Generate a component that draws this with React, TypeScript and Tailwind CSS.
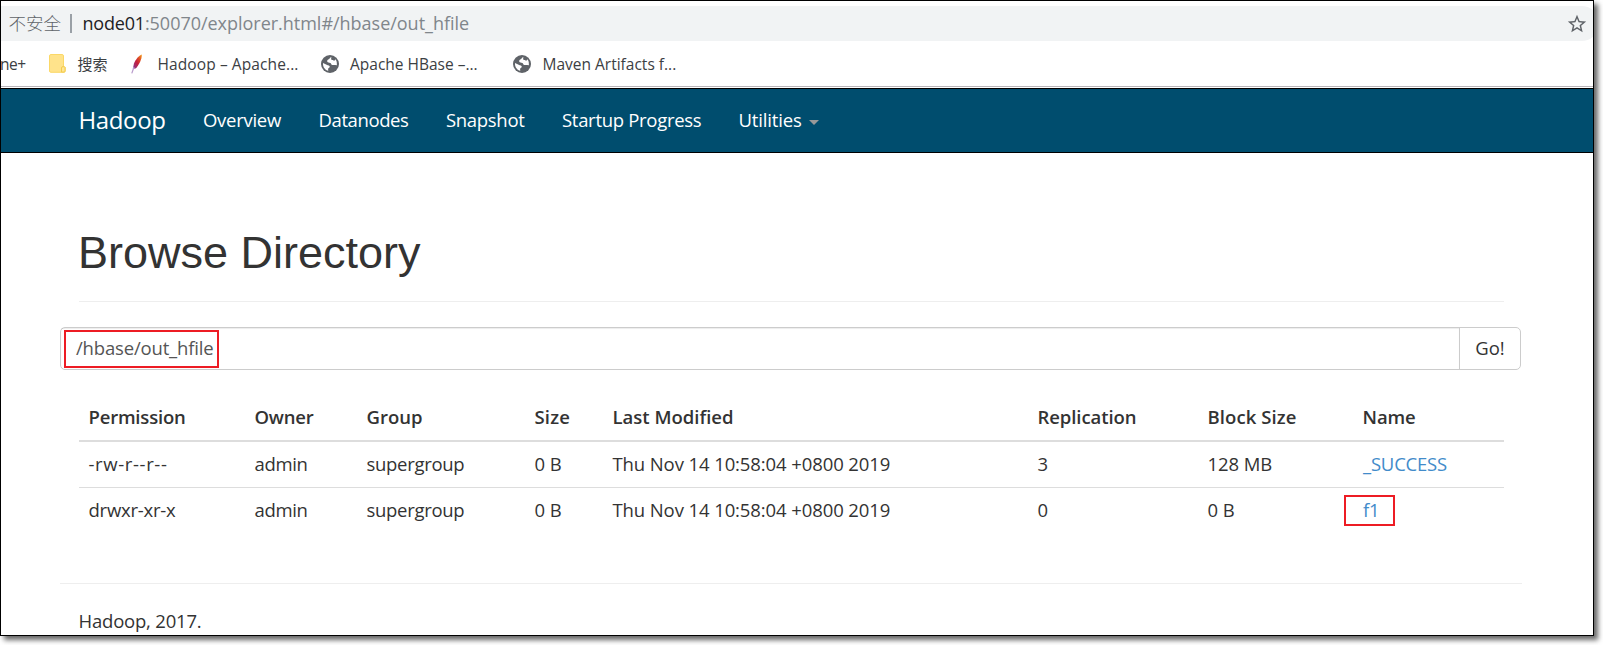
const columns = [
  { label: "Permission", width: "w-[166px]", tracking: "tracking-[-0.2px]" },
  { label: "Owner", width: "w-[112px]", tracking: "tracking-[-0.2px]" },
  { label: "Group", width: "w-[168px]", tracking: "" },
  { label: "Size", width: "w-[78px]", tracking: "tracking-[0.2px]" },
  { label: "Last Modified", width: "w-[425px]", tracking: "" },
  { label: "Replication", width: "w-[170px]", tracking: "tracking-[-0.07px]" },
  { label: "Block Size", width: "w-[155px]", tracking: "tracking-[0.09px]" },
  { label: "Name", width: "w-[151px]", tracking: "tracking-[-0.1px]" },
];

const files = [
  { permission: "-rw-r--r--", tracking: "tracking-[0.63px]", replication: "3", blockSize: "128 MB", name: "_SUCCESS", marked: false },
  { permission: "drwxr-xr-x", tracking: "tracking-[-0.23px]", replication: "0", blockSize: "0 B", name: "f1", marked: true },
];

function Star() {
  return (
    <svg className="size-[22px]" viewBox="0 0 24 24" fill="#5f6368">
      <path d="M22 9.24l-7.19-.62L12 2 9.19 8.63 2 9.24l5.46 4.73L5.82 21 12 17.27 18.18 21l-1.63-7.03L22 9.24zM12 15.4l-3.76 2.27 1-4.28-3.32-2.88 4.38-.38L12 6.1l1.71 4.04 4.38.38-3.32 2.88 1 4.28L12 15.4z" />
    </svg>
  );
}

function Folder() {
  return (
    <svg className="h-[19px] w-[17px]" viewBox="0 0 17 19">
      <path d="M.5 2Q.5.5 2 .5H13Q14.5.5 14.5 2V12.2L16.2 13.2V17Q16.2 18.3 15 18.3H2Q.5 18.3.5 17Z" fill="#ffe38b" stroke="#fbd867" />
      <path d="M12.5 18V14Q12.5 12.6 14 12.6T16 13.6V17Q16 18 15 18Z" fill="#ffe694" stroke="#f3cb4e" />
    </svg>
  );
}

function Feather() {
  return (
    <svg className="h-[20px] w-[12px]" viewBox="0 0 12 20">
      <defs>
        <linearGradient id="feather" x1="1" y1="0" x2="0" y2="1">
          <stop offset="0" stopColor="#f7a11b" />
          <stop offset="0.3" stopColor="#dc4b25" />
          <stop offset="0.55" stopColor="#c41f3e" />
          <stop offset="1" stopColor="#7d3a98" />
        </linearGradient>
      </defs>
      <path d="M10.8.4C8 1.2 4.500 5.500 3 9.500L1.800 14.800 4.600 14.600C8 11 11 5 10.800.4Z" fill="url(#feather)" />
      <path d="M3 13L.8 19.400" stroke="#b79acb" strokeWidth="1.200" />
    </svg>
  );
}

function Globe() {
  return (
    <svg className="size-[18px]" viewBox="0 0 18 18">
      <circle cx="9" cy="9" r="9" fill="#5f6368" />
      <path d="M10.300 2.100C8.900 2.600 8.900 3.800 7.700 4.300 6.400 4.800 5.900 5.700 6.300 6.800 6.700 7.800 8.300 7.700 9.300 8 10.200 8.300 10.100 9.500 11 9.900 12 10.300 13.300 9.700 14.100 10.100L15.900 10.300C15.700 8 16.300 6.500 14.300 4.300 13.400 6.200 12.700 6 12.300 5.300 11.900 4.500 11 5.300 10.300 4.400 9.900 3.700 10.500 2.900 10.300 2.100Z" fill="#fff" />
      <path d="M2 8.100L6.700 10.300C8.500 10.600 9.100 11.400 8.600 12.300 8.200 13 7.100 13.200 7.100 14.200L7.300 15.800C4.200 15.100 2 12.300 2 9Z" fill="#fff" />
    </svg>
  );
}

export default function App() {
  return (
    <div className="h-[645px] w-[1603px] overflow-hidden bg-white font-['Open_Sans','Noto_Sans_CJK_SC',sans-serif] text-[18.5px] text-[#333]">
      <div className="flex h-[636px] w-[1594px] flex-col border border-black bg-white shadow-[4px_4px_5px_rgba(0,0,0,0.6)]">
        <div className="mt-[5px] h-[35px] shrink-0 overflow-hidden">
          <div className="flex h-full w-[1598px] items-center rounded-r-full bg-[#f1f3f4] pl-[7.5px] text-[18px] leading-none whitespace-nowrap">
            <span className="w-[61px] text-[17.5px] font-light text-[#5f6368]">不安全</span>
            <span className="h-[19px] w-[2px] bg-[#9aa0a6]" />
            <span className="ml-[11px] pb-[2px] tracking-[-0.2px] text-[#202124]">node01</span>
            <span className="pb-[2px] tracking-[-0.02px] text-[#80868b]">:50070/explorer.html#/hbase/out_hfile</span>
            <span className="mr-[11px] ml-auto">
              <Star />
            </span>
          </div>
        </div>

        <div className="flex h-[45px] shrink-0 items-center text-[15.5px] leading-none whitespace-nowrap text-[#3c4043]">
          <span className="w-[48px] pt-[2px] tracking-[-0.5px]">
            <span className="-ml-[1px]">ne+</span>
          </span>
          <Folder />
          <span className="ml-[11.5px] w-[53.5px] pt-[2px] text-[15px]">搜索</span>
          <Feather />
          <span className="ml-[14.5px] w-[163.5px] pt-[2px] tracking-[0.1px]">Hadoop – Apache...</span>
          <Globe />
          <span className="ml-[11px] w-[163px] pt-[2px]">Apache HBase –...</span>
          <Globe />
          <span className="ml-[11.5px] pt-[2px]">Maven Artifacts f...</span>
        </div>
        <div className="h-[2px] shrink-0 border-t border-[#b9b5ba]" />

        <nav className="flex h-[65px] shrink-0 items-center border-y border-black bg-[#004d6e] pl-[77.5px] leading-none whitespace-nowrap text-white">
          <span className="w-[124.5px] pb-[2px] text-[24px] tracking-[-0.38px]">Hadoop</span>
          <span className="w-[115.5px] tracking-[-0.28px]">Overview</span>
          <span className="w-[127.5px] tracking-[-0.4px]">Datanodes</span>
          <span className="w-[116px] tracking-[-0.31px]">Snapshot</span>
          <span className="w-[176.5px] tracking-[-0.3px]">Startup Progress</span>
          <span className="tracking-[-0.17px]">Utilities</span>
          <span className="mt-[3px] ml-[7px] border-x-[5px] border-t-[5px] border-x-transparent border-t-[#999]" />
        </nav>

        <main className="flex grow flex-col px-[59px]">
          <header className="mx-[19px] flex h-[149px] w-[1425px] shrink-0 items-end border-b border-[#eee] pb-[23px] font-['Liberation_Sans',Arial,sans-serif]">
            <h1 className="-ml-[1px] text-[45px] leading-[50px]">Browse Directory</h1>
          </header>

          <div className="mt-[25px] flex h-[43px] w-[1461px] shrink-0 rounded-[5px] border border-[#ccc] leading-none">
            <div className="grow p-[2px] pl-[3px] shadow-[inset_0_1px_1px_rgba(0,0,0,0.075)]">
              <div className="flex h-[38px] w-[155px] items-center border-2 border-[#ed1c24] pb-[2px] pl-[10px] tracking-[-0.17px] text-[#555]">
                /hbase/out_hfile
              </div>
            </div>
            <button className="w-[61px] border-l border-[#ccc] leading-none">Go!</button>
          </div>

          <table className="mx-[19px] mt-[24px] w-[1425px] table-fixed border-collapse text-left leading-none">
            <thead>
              <tr className="h-[47px] border-b-2 border-[#ddd]">
                {columns.map((c) => (
                  <th key={c.label} className={`${c.width} ${c.tracking} py-0 pr-0 pl-[9.5px] font-semibold`}>
                    {c.label}
                  </th>
                ))}
              </tr>
            </thead>
            <tbody>
              {files.map((f) => (
                <tr key={f.name} className="h-[46px] border-b border-[#ddd] last:border-b-0">
                  <td className={`pl-[9.5px] ${f.tracking}`}>{f.permission}</td>
                  <td className="pl-[9.5px] tracking-[-0.35px]">admin</td>
                  <td className="pl-[9.5px] tracking-[-0.3px]">supergroup</td>
                  <td className="pl-[9.5px] tracking-[-0.1px]">0 B</td>
                  <td className="pl-[9.5px] tracking-[-0.1px]">Thu Nov 14 10:58:04 +0800 2019</td>
                  <td className="pl-[9.5px]">{f.replication}</td>
                  <td className="pl-[9.5px] tracking-[-0.1px]">{f.blockSize}</td>
                  <td className="relative pl-[10px] tracking-[-0.2px] text-[#428bca]">
                    {f.name}
                    {f.marked && (
                      <span className="absolute top-[7px] -left-[9px] h-[31px] w-[51px] border-2 border-[#ed1c24]" />
                    )}
                  </td>
                </tr>
              ))}
            </tbody>
          </table>

          <footer className="mt-[50px] h-[51px] w-[1462px] shrink-0 border-t border-[#eee] pt-[27px] pl-[18.5px] leading-[19px] tracking-[-0.2px]">
            Hadoop, 2017.
          </footer>
        </main>
      </div>
    </div>
  );
}
